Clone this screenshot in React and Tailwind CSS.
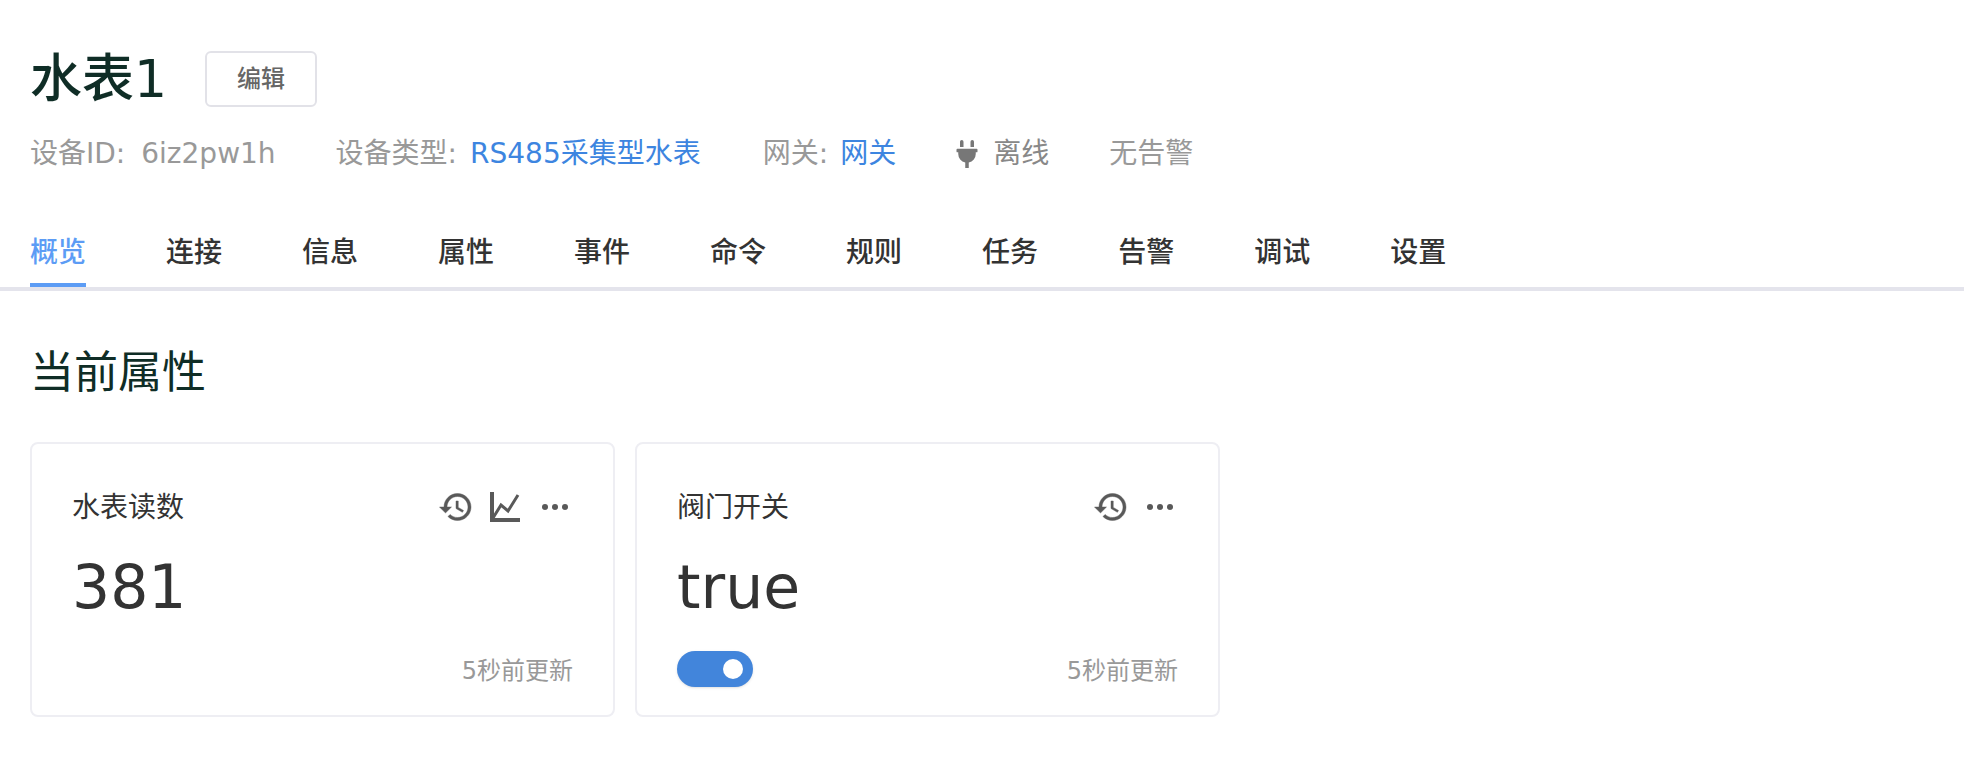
import { FaPlug } from 'react-icons/fa';

const tabs = ['概览', '连接', '信息', '属性', '事件', '命令', '规则', '任务', '告警', '调试', '设置'];

const font = { fontFamily: '"DejaVu Sans", "Noto Sans CJK SC", sans-serif' };

function HistoryIcon() {
  return (
    <svg viewBox="0 0 24 24" className="w-[36px] h-[36px] fill-[#595959] stroke-[#595959] stroke-[0.3]">
      <path d="M13 3c-4.97 0-9 4.03-9 9H1l3.89 3.89.07.14L9 12H6c0-3.87 3.13-7 7-7s7 3.13 7 7-3.13 7-7 7c-1.93 0-3.68-.79-4.94-2.06l-1.42 1.42C8.27 19.99 10.51 21 13 21c4.97 0 9-4.03 9-9s-4.03-9-9-9zm-1 5v5l4.28 2.54.72-1.21-3.5-2.08V8H12z" />
    </svg>
  );
}

function ChartIcon() {
  return (
    <svg viewBox="0 0 30 30" className="w-[30px] h-[30px] ml-[16px] mr-[4px]" fill="none" stroke="#595959">
      <path d="M2 0v28H30" strokeWidth="4" />
      <path d="M3 26L11 13l7 6L28 3" strokeWidth="3" />
    </svg>
  );
}

function MoreIcon() {
  return (
    <div className="flex gap-[4px] ml-[18px] mr-[5px]">
      <span className="w-[6px] h-[6px] rounded-full bg-[#595959]" />
      <span className="w-[6px] h-[6px] rounded-full bg-[#595959]" />
      <span className="w-[6px] h-[6px] rounded-full bg-[#595959]" />
    </div>
  );
}

function Card({ name, value, chart, toggle }) {
  return (
    <div className="w-[585px] h-[275px] border-2 border-[#eeeef3] rounded-lg pt-[44px] pb-[26px] px-[40px] flex flex-col">
      <div className="flex items-center justify-between h-[40px]">
        <span className="text-[28px] text-[#333]">{name}</span>
        <div className="flex items-center -mt-[2px]">
          <HistoryIcon />
          {chart && <ChartIcon />}
          <MoreIcon />
        </div>
      </div>
      <div className="text-[60px] leading-[80px] text-[#333] mt-[19px]">{value}</div>
      <div className="flex items-center justify-between mt-auto">
        {toggle ? (
          <div className="w-[76px] h-[36px] rounded-full bg-[#4285db] flex items-center justify-end pr-[10px] shadow-sm">
            <span className="w-[20px] h-[20px] rounded-full bg-white" />
          </div>
        ) : <span />}
        <span className="text-[24px] text-[#999] pt-[4px]">5秒前更新</span>
      </div>
    </div>
  );
}

export default function App() {
  return (
    <div style={font} className="bg-white min-h-[782px] px-[30px] pt-[48px]">
      <div className="flex items-center h-[62px]">
        <h1 className="text-[52px] leading-[62px] font-medium text-[#0f2d26]">水表1</h1>
        <button className="ml-[38px] w-[112px] h-[56px] border-2 border-[#e2e2e8] rounded-md text-[24px] font-medium text-[#666]">编辑</button>
      </div>

      <div className="flex items-center text-[28px] text-[#999] mt-[22px] h-[44px]">
        <span className="flex">设备ID:<span className="ml-[16px]">6iz2pw1h</span></span>
        <span className="ml-[60px] flex">设备类型:<span className="ml-[13px] text-[#3d85e0]">RS485采集型水表</span></span>
        <span className="ml-[62px] flex">网关:<span className="ml-[12px] text-[#3d85e0]">网关</span></span>
        <span className="ml-[57px] flex items-center text-[#888]">
          <FaPlug className="w-[28px] h-[28px] text-[#777] mr-[12px]" />
          离线
        </span>
        <span className="ml-[60px]">无告警</span>
      </div>

      <div className="mt-[56px] -mx-[30px] px-[30px] border-b-4 border-[#e4e4ec] flex gap-[80px]">
        {tabs.map((t, i) => (
          <div
            key={t}
            className={i === 0
              ? 'text-[28px] font-medium text-[#5c9cf5] h-[55px] -mb-[4px] border-b-4 border-[#5c9cf5]'
              : 'text-[28px] font-medium text-[#333] h-[55px]'}
          >
            {t}
          </div>
        ))}
      </div>

      <h2 className="text-[44px] leading-[60px] text-[#0f2d26] mt-[52px]">当前属性</h2>

      <div className="flex gap-[20px] mt-[39px]">
        <Card name="水表读数" value="381" chart />
        <Card name="阀门开关" value="true" toggle />
      </div>
    </div>
  );
}
